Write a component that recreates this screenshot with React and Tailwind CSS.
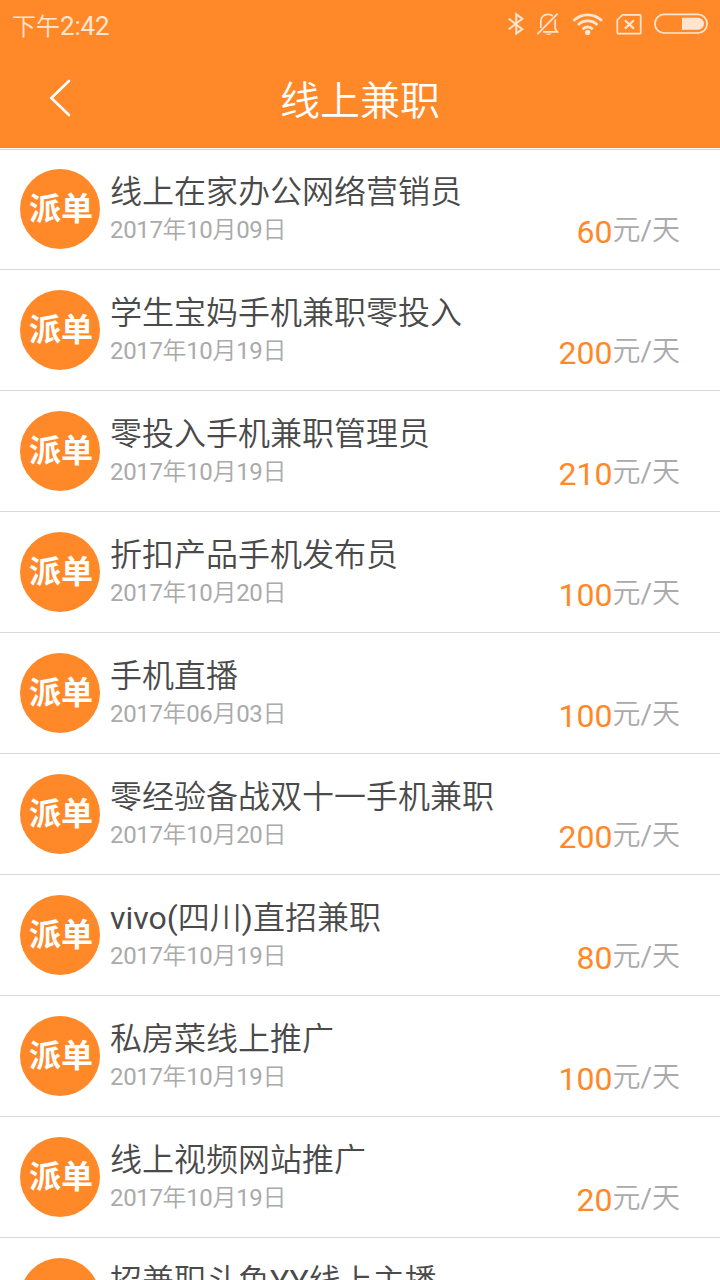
import React from 'react';

const jobs = [
  { title: '线上在家办公网络营销员', date: '2017年10月09日', pay: 60 },
  { title: '学生宝妈手机兼职零投入', date: '2017年10月19日', pay: 200 },
  { title: '零投入手机兼职管理员', date: '2017年10月19日', pay: 210 },
  { title: '折扣产品手机发布员', date: '2017年10月20日', pay: 100 },
  { title: '手机直播', date: '2017年06月03日', pay: 100 },
  { title: '零经验备战双十一手机兼职', date: '2017年10月20日', pay: 200 },
  { title: 'vivo(四川)直招兼职', date: '2017年10月19日', pay: 80 },
  { title: '私房菜线上推广', date: '2017年10月19日', pay: 100 },
  { title: '线上视频网站推广', date: '2017年10月19日', pay: 20 },
  { title: '招兼职斗鱼YY线上主播' },
];

// latin runs use the regular weight, chinese stays lighter
const Mixed = ({ text }) =>
  text.split(/([\x20-\x7e]+)/).map((part, i) =>
    i % 2 ? <span key={i} className="font-normal">{part}</span> : part
  );

const BluetoothIcon = () => (
  <svg className="w-[18px] h-6" viewBox="0 0 18 24" fill="none" stroke="#ffe6d3" strokeWidth="2">
    <path d="M1.8 6.8L15.3 17.2L9.3 21.6V2.2L15.3 6.8L1.8 17.2" />
  </svg>
);

const MutedIcon = () => (
  <svg className="w-6 h-6 ml-[11px]" viewBox="0 0 24 24" fill="none" stroke="#ffe6d3" strokeWidth="1.7">
    <path d="M4.8 16V9.5C4.8 5 8 2.3 12 2.3C14 2.3 15.6 2.9 16.8 4M19.2 7.6V16.8L21.3 19.9H7" />
    <path d="M1.4 22.2L21.6 1.6" />
    <path d="M9.3 21.6H15.7C14.8 23.5 10.2 23.5 9.3 21.6Z" fill="#ffe6d3" stroke="none" />
  </svg>
);

const WifiIcon = () => (
  <svg className="w-8 h-6 ml-3" viewBox="0 0 32 24" fill="none" stroke="#ffe6d3" strokeWidth="2.8">
    <path d="M1.4 8.8C9.5 0.8 21.9 0.8 30 8.8" />
    <path d="M6 13C11.4 7.6 20 7.6 25.4 13" />
    <path d="M10.7 17.2C13.5 14.2 17.9 14.2 20.7 17.2" />
    <circle cx="15.7" cy="20.4" r="2.6" fill="#ffe6d3" stroke="none" />
  </svg>
);

const NoSimIcon = () => (
  <svg className="w-[26px] h-6 ml-3" viewBox="0 0 26 24" fill="none" stroke="#ffe6d3" strokeWidth="1.7">
    <path d="M6.5 2.8H23.7C24.3 2.8 24.7 3.2 24.7 3.8V20.7C24.7 21.3 24.3 21.7 23.7 21.7H2.3C1.7 21.7 1.3 21.3 1.3 20.7V8Z" />
    <path d="M8.9 8.2L17.9 16.6M17.9 8.2L8.9 16.6" strokeWidth="2.2" />
  </svg>
);

const BatteryIcon = () => (
  <svg className="w-[54px] h-6 ml-3" viewBox="0 0 54 24" fill="none" stroke="#ffe6d3" strokeWidth="1.7">
    <rect x="0.9" y="2.4" width="52.2" height="18.6" rx="9.3" />
    <path d="M28 5.7H44A6 6 0 0 1 44 17.7H28Z" fill="#ffe6d3" stroke="none" />
  </svg>
);

const JobRow = ({ title, date, pay }) => (
  <li className="flex h-[121px] pt-5 pl-5 pr-10 border-b border-[#d9d9d9]">
    <div className="w-20 h-20 shrink-0 rounded-full bg-[#ff8829] flex items-center justify-center text-white text-[32px] leading-none font-bold pl-0.5">
      派单
    </div>
    <div className="ml-2.5 flex-1 whitespace-nowrap">
      <div className="h-[46px] leading-[46px] text-[32px] text-[#4a4a4a]"><Mixed text={title} /></div>
      {date && (
        <div className="h-[30px] leading-[30px] text-2xl tracking-[-0.35px] text-[#aaaaaa]"><Mixed text={date} /></div>
      )}
    </div>
    {pay && (
      <div className="self-start mt-[43px] flex leading-10 whitespace-nowrap">
        <span className="text-[32px] font-normal text-[#ff8829]">{pay}</span>
        <span className="-mt-px text-[28px] text-[#aaaaaa]"><Mixed text="元/天" /></span>
      </div>
    )}
  </li>
);

const App = () => {
  return (
    <div className="w-full h-screen overflow-hidden bg-white font-[350] font-['Roboto','Noto_Sans_CJK_SC',sans-serif]">
      <header className="h-[148px] bg-[#ff8829] text-white">
        <div className="h-[50px] flex items-center justify-between pl-3 pr-3">
          <span className="pt-0.5 text-2xl text-[#ffe6d3]">下午<span className="text-[26px] font-normal tracking-[-0.2px]">2:42</span></span>
          <div className="flex items-center -mt-0.5">
            <BluetoothIcon />
            <MutedIcon />
            <WifiIcon />
            <NoSimIcon />
            <BatteryIcon />
          </div>
        </div>
        <div className="h-[98px] grid grid-cols-[120px_1fr_120px] items-center">
          <svg className="w-6 h-10 ml-12 -mt-0.5" viewBox="0 0 24 40" fill="none" stroke="white" strokeWidth="2.6" strokeLinecap="round">
            <path d="M21 3L3.3 20L21 37" />
          </svg>
          <h1 className="text-[40px] leading-none text-center pt-1.5">线上兼职</h1>
        </div>
      </header>
      <div className="mt-px h-px bg-[#d9d9d9]" />
      <ul className="-mt-px">
        {jobs.map((job, i) => (
          <JobRow key={i} {...job} />
        ))}
      </ul>
    </div>
  );
};

export default App;
